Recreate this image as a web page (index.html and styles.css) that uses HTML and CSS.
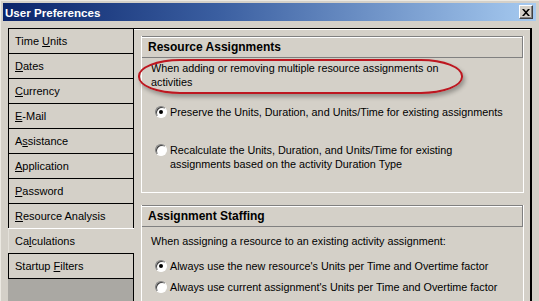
FILE: index.html
```html
<!DOCTYPE html>
<html lang="en">
<head>
  <meta charset="UTF-8">
  <title>User Preferences</title>
  <link rel="stylesheet" href="styles.css">
</head>
<body>

<div class="window">
  <div class="titlebar">
    <span class="title">User Preferences</span>
    <button class="close-btn">
      <svg width="8" height="7" viewBox="0 0 8 7"><path d="M0 0h2l2 2.2L6 0h2L5 3.5 8 7H6L4 4.8 2 7H0l3-3.5z" fill="#000"/></svg>
    </button>
  </div>

  <div class="main">
    <ul class="nav">
      <li class="nav-item">Time <u>U</u>nits</li>
      <li class="nav-item"><u>D</u>ates</li>
      <li class="nav-item"><u>C</u>urrency</li>
      <li class="nav-item"><u>E</u>-Mail</li>
      <li class="nav-item">A<u>s</u>sistance</li>
      <li class="nav-item"><u>A</u>pplication</li>
      <li class="nav-item"><u>P</u>assword</li>
      <li class="nav-item"><u>R</u>esource Analysis</li>
      <li class="nav-item selected">Ca<u>l</u>culations</li>
      <li class="nav-item last">Startup <u>F</u>ilters</li>
    </ul>

    <div class="panel">
      <section class="group first">
        <h2 class="group-head">Resource Assignments</h2>
        <div class="group-body">
          <p class="note">When adding or removing multiple resource assignments on<br>activities</p>
          <div class="radio-row gap-a"><span class="radio checked"></span><span>Preserve the Units, Duration, and Units/Time for existing assignments</span></div>
          <div class="radio-row gap-b"><span class="radio"></span><span>Recalculate the Units, Duration, and Units/Time for existing<br>assignments based on the activity Duration Type</span></div>
        </div>
      </section>

      <section class="group second">
        <h2 class="group-head">Assignment Staffing</h2>
        <div class="group-body">
          <p class="note">When assigning a resource to an existing activity assignment:</p>
          <div class="radio-row gap-c"><span class="radio checked"></span><span>Always use the new resource's Units per Time and Overtime factor</span></div>
          <div class="radio-row gap-d"><span class="radio"></span><span>Always use current assignment's Units per Time and Overtime factor</span></div>
        </div>
      </section>
    </div>
  </div>

  <!-- red highlight drawn over the dialog -->
  <div class="highlight"></div>
</div>

</body>
</html>
```

FILE: styles.css
```css
* {
  box-sizing: border-box;
}
html, body {
  margin: 0;
  padding: 0;
  background-color: #d4d0c8;
}
body {
  font-family: "Liberation Sans", Arial, sans-serif;
  font-size: 11px;
  color: #000;
}
.window {
  position: relative;
  width: 539px;
  height: 301px;
  padding: 3px 3px 0 3px;
  background-color: #d4d0c8;
  border-top: 1px solid #ece9e2;
  border-left: 1px solid #ece9e2;
  overflow: hidden;
}
.titlebar {
  display: flex;
  align-items: center;
  justify-content: space-between;
  height: 18px;
  margin-top: -1px;
  margin-left: -1px;
  padding: 0 3px 0 2px;
  background-image: linear-gradient(to right, #0a246a, #3a5ea0 40%, #a6caf0);
}
.title {
  color: #fff;
  font-weight: bold;
  font-size: 11.6px;
}
.close-btn {
  width: 14px;
  height: 14px;
  padding: 0;
  display: flex;
  align-items: center;
  justify-content: center;
  background-color: #d4d0c8;
  border: 1px solid;
  border-color: #fff #404040 #404040 #fff;
  box-shadow: inset -1px -1px 0 #808080;
}
.main {
  display: flex;
  margin-top: 7px;
  padding-left: 4px;
  height: 280px;
}
.nav {
  list-style: none;
  margin: 0;
  padding: 0;
  width: 126px;
  background-color: #aaa8a3;
  border-right: 1px solid #000;
}
.nav-item {
  height: 25px;
  line-height: 24px;
  padding-left: 6px;
  background-color: #d4d0c8;
  border-top: 1px solid #000;
  border-left: 1px solid #000;
}
.nav-item.selected {
  position: relative;
  z-index: 1;
  margin-right: -1px;
  border-top-color: #fff;
  border-left-color: #e4e1da;
}
.nav-item.last {
  height: 26px;
  border-bottom: 1px solid #000;
}
.panel {
  width: 398px;
  padding: 7px 6px 0 7px;
  border-top: 1px solid #000;
  border-right: 2px solid #000;
  box-shadow: inset 0 1px 0 #fff;
}
.group {
  border: 1px solid #fff;
  border-top: none;
}
.group.first {
  height: 157px;
}
.group.second {
  margin-top: 12px;
  height: 120px;
}
.group-head {
  margin: 0;
  height: 22px;
  line-height: 20px;
  padding-left: 6px;
  font-size: 12px;
  font-weight: bold;
  border-top: 1px solid #808080;
  border-right: 1px solid #808080;
  border-bottom: 1px solid #808080;
  box-shadow: inset 0 1px 0 #fff;
}
.group-body {
  padding: 3px 0 0 9px;
  line-height: 14px;
  font-size: 10.8px;
}
.second .group-body {
  padding-top: 7px;
}
.note {
  margin: 0;
}
.radio-row {
  display: flex;
  align-items: flex-start;
  gap: 3px;
  padding-left: 4px;
}
.gap-a {
  margin-top: 16px;
}
.gap-b {
  margin-top: 24px;
}
.gap-c {
  margin-top: 11px;
}
.gap-d {
  margin-top: 7px;
}
.radio {
  position: relative;
  flex: none;
  width: 12px;
  height: 12px;
  margin-top: 1px;
  border-radius: 50%;
  background-color: #fff;
  border: 1px solid;
  border-color: #808080 #fff #fff #808080;
  box-shadow: inset 1px 1px 0 #404040, 0 0 0 0.5px #d4d0c8;
}
.radio.checked::after {
  content: "";
  position: absolute;
  left: 3px;
  top: 3px;
  width: 4px;
  height: 4px;
  border-radius: 50%;
  background-color: #000;
}
.highlight {
  position: absolute;
  left: 137px;
  top: 58px;
  width: 325px;
  height: 35px;
  border: 2px solid #bd1720;
  border-radius: 42px / 17px;
  box-shadow: 2px 3px 4px rgba(0, 0, 0, 0.3);
}
```
